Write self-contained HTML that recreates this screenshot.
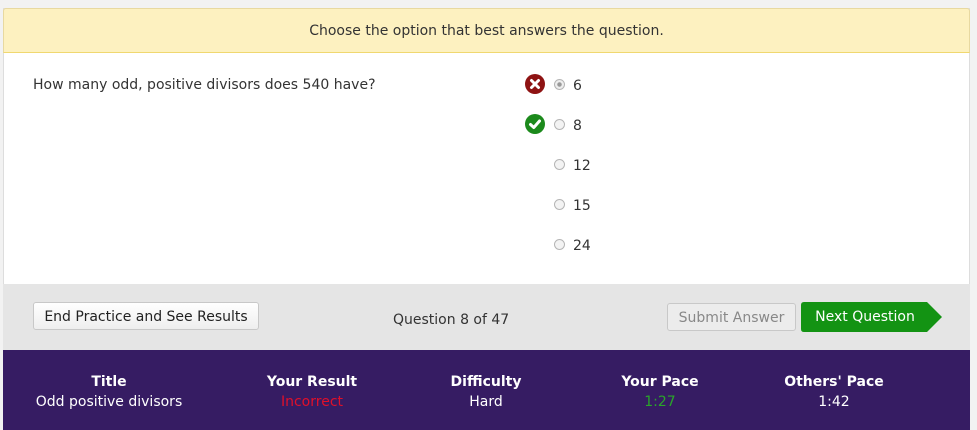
<!DOCTYPE html><html><head><style>
body{margin:0;width:977px;height:430px;background:#f2f2f2;font-family:"DejaVu Sans","Liberation Sans",sans-serif;font-size:14px;color:#333;overflow:hidden;position:relative}
.c{position:absolute;left:3px;top:8px;width:967px;height:422px;background:#fff;border:1px solid #ddd;border-bottom:none;box-sizing:border-box}
.hd{position:absolute;left:3px;top:8px;width:967px;height:45px;background:#fdf1c0;border:1px solid #e8d9a0;border-bottom:1px solid #f0d870;box-sizing:border-box;text-align:center;line-height:44px;color:#333;border-radius:3px 3px 0 0}
.q{position:absolute;left:33px;top:77px}
.opt{position:absolute;left:554px;height:16px;line-height:16px}
.r{position:absolute;left:0;top:2px;width:11px;height:11px;border-radius:50%;border:1px solid #b5b5b5;background:#f3f3f3;box-sizing:border-box}
.opt span{position:absolute;left:19px;top:1px}
.ic{position:absolute;left:525px;width:20px;height:20px;border-radius:50%}
.ft{position:absolute;left:3px;top:284px;width:967px;height:66px;background:#e5e5e5}
.btn{position:absolute;border:1px solid #c8c8c8;border-radius:3px;background:linear-gradient(#fff,#eee);box-sizing:border-box;text-align:center}
.pu{position:absolute;left:3px;top:350px;width:967px;height:80px;background:#361c63;color:#fff}
.col{position:absolute;top:22px;text-align:center;width:200px;margin-left:-100px;line-height:20px}
.col b{display:block;font-size:14px}
</style></head><body>
<div class="c"></div>
<div class="hd">Choose the option that best answers the question.</div>
<div class="q">How many odd, positive divisors does 540 have?</div>
<div class="ic" style="top:74px;background:#8e1313"><svg width="20" height="20"><path d="M6.5 6.5L13.5 13.5M13.5 6.5L6.5 13.5" stroke="#fff" stroke-width="3" stroke-linecap="round"/></svg></div>
<div class="ic" style="top:114px;background:#1c8a1c"><svg width="20" height="20"><path d="M5.5 10.5L8.8 13.5L14.5 7" stroke="#fff" stroke-width="3" fill="none" stroke-linecap="round" stroke-linejoin="round"/></svg></div>
<div class="opt" style="top:77px"><div class="r" style="background:radial-gradient(#999 30%,#eee 40%)"></div><span>6</span></div>
<div class="opt" style="top:117px"><div class="r"></div><span>8</span></div>
<div class="opt" style="top:157px"><div class="r"></div><span>12</span></div>
<div class="opt" style="top:197px"><div class="r"></div><span>15</span></div>
<div class="opt" style="top:237px"><div class="r"></div><span>24</span></div>
<div class="ft"></div>
<div class="btn" style="left:33px;top:302px;width:226px;height:28px;line-height:28px;color:#222">End Practice and See Results</div>
<div style="position:absolute;left:393px;top:312px">Question 8 of 47</div>
<div class="btn" style="left:667px;top:303px;width:129px;height:28px;line-height:28px;color:#888;background:#ececec">Submit Answer</div>
<svg style="position:absolute;left:801px;top:302px" width="141" height="30"><path d="M3 0H126L141 15L126 30H3Q0 30 0 27V3Q0 0 3 0Z" fill="#139313"/></svg>
<div style="position:absolute;left:801px;top:302px;width:128px;line-height:30px;text-align:center;color:#fff">Next Question</div>
<div class="pu">
<div class="col" style="left:106px"><b>Title</b>Odd positive divisors</div>
<div class="col" style="left:309px"><b>Your Result</b><span style="color:#e0102a">Incorrect</span></div>
<div class="col" style="left:483px"><b>Difficulty</b>Hard</div>
<div class="col" style="left:657px"><b>Your Pace</b><span style="color:#2aa52a">1:27</span></div>
<div class="col" style="left:831px"><b>Others' Pace</b>1:42</div>
</div>
</body></html>
